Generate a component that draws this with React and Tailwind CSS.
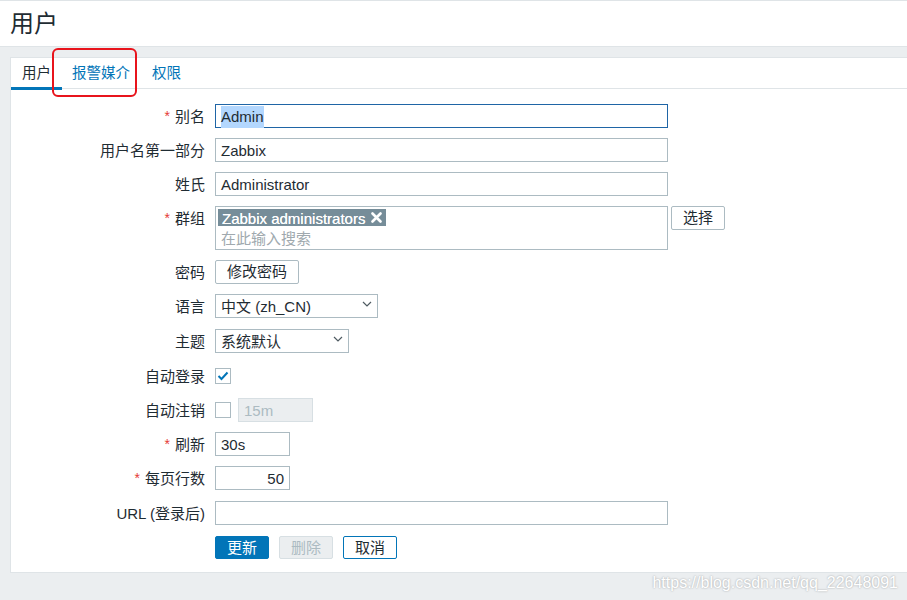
import React from "react";

const Req = () => <span className="text-[#e53935] mr-[5px] text-[14px] relative top-[-1px]">*</span>;

function Label({ children, req, h = "h-[24px]", top = false }) {
  return (
    <div className={`${h} flex items-center justify-end pt-[2px] text-[15px] text-[#1f2c33] whitespace-nowrap ${top ? "self-start" : ""}`}>
      {req && <Req />}
      {children}
    </div>
  );
}

function Input({ w, value, right = false, focus = false, disabled = false, selected = false }) {
  return (
    <div
      className={`${w} h-[24px] border flex items-center pt-[2px] text-[15px] ${
        focus ? "border-[#1f65a6]" : disabled ? "border-[#d7dfe3] bg-[#ebeef0]" : "border-[#acbbc2] bg-white"
      } ${right ? "justify-end pr-[5px]" : "pl-[5px]"} ${disabled ? "text-[#acbbc2]" : "text-[#1f2c33]"}`}
    >
      {selected ? <span className="bg-[#b3d7fe]">{value}</span> : value}
    </div>
  );
}

function Btn({ w, children }) {
  return (
    <div className={`${w} h-[24px] border border-[#acbbc2] rounded-[2px] bg-white flex items-center justify-center pt-[1px] text-[15px] text-[#1f2c33]`}>
      {children}
    </div>
  );
}

function Select({ w, value }) {
  return (
    <div className={`${w} h-[24px] border border-[#acbbc2] bg-white flex items-center justify-between pl-[5px] pr-[5px] text-[15px] text-[#1f2c33]`}>
      <span className="pt-[2px]">{value}</span>
      <svg width="10" height="6" viewBox="0 0 10 6" className="mb-[4px]">
        <path d="M1 1 L5 5 L9 1" fill="none" stroke="#4f5b62" strokeWidth="1.2" />
      </svg>
    </div>
  );
}

function Checkbox({ checked }) {
  return (
    <div className="w-[16px] h-[16px] border border-[#acbbc2] bg-white flex items-center justify-center">
      {checked && (
        <svg width="12" height="10" viewBox="0 0 12 10">
          <path d="M1.5 5 L4.5 8 L10.5 1.5" fill="none" stroke="#0275b8" strokeWidth="2" />
        </svg>
      )}
    </div>
  );
}

export default function App() {
  return (
    <div className="relative w-full min-h-[600px] bg-[#ebeef0] [font-family:'Liberation_Sans','Noto_Sans_CJK_SC',sans-serif] overflow-hidden">
      <div className="h-[47px] bg-white border-t border-b border-[#dfe4e7] flex items-center pl-[10px]">
        <h1 className="text-[24px] leading-none text-[#1f2c33] mt-[1px]">用户</h1>
      </div>

      <div className="pl-[10px] pt-[10px]">
        <div className="bg-white border border-r-0 border-[#dfe4e7] h-[516px]">
          <div className="h-[31px] border-b border-[#dfe4e7] flex text-[14.5px]">
            <div className="relative px-[11px] flex items-center pt-[1px] text-[#1f2c33]">
              用户
              <span className="absolute left-0 right-0 bottom-[-2px] h-[3px] bg-[#0275b8]" />
            </div>
            <div className="pl-[10px] pr-[11px] flex items-center pt-[1px] text-[#0275b8]">报警媒介</div>
            <div className="px-[11px] flex items-center pt-[1px] text-[#0275b8]">权限</div>
          </div>

          <div className="grid grid-cols-[194px_1fr] gap-x-[10px] gap-y-[10px] pt-[15px]">
            <Label req>别名</Label>
            <Input w="w-[453px]" value="Admin" focus selected />

            <Label>用户名第一部分</Label>
            <Input w="w-[453px]" value="Zabbix" />

            <Label>姓氏</Label>
            <Input w="w-[453px]" value="Administrator" />

            <Label req top>群组</Label>
            <div className="flex items-start gap-[3px]">
              <div className="w-[453px] h-[44px] border border-[#acbbc2] bg-white pl-[2px] pt-[2px] flex flex-col items-start">
                <div className="h-[17px] bg-[#768d99] text-white text-[15px] leading-[17px] pl-[4px] pr-[4px] flex items-center gap-[6px]">
                  <span className="pt-[1px] [text-shadow:0_0_0.4px_white]">Zabbix administrators</span>
                  <svg width="11" height="11" viewBox="0 0 11 11">
                    <path d="M1.5 1.5 L9.5 9.5 M9.5 1.5 L1.5 9.5" stroke="white" strokeWidth="2.6" strokeLinecap="round" />
                  </svg>
                </div>
                <div className="pl-[3px] pt-[2px] text-[15px] leading-[22px] text-[#a0a9ae]">在此输入搜索</div>
              </div>
              <Btn w="w-[54px]">选择</Btn>
            </div>

            <Label>密码</Label>
            <div><Btn w="w-[84px]">修改密码</Btn></div>

            <Label h="h-[25px]">语言</Label>
            <div><Select w="w-[163px]" value="中文 (zh_CN)" /></div>

            <Label h="h-[25px]">主题</Label>
            <div><Select w="w-[134px]" value="系统默认" /></div>

            <Label>自动登录</Label>
            <div className="flex items-center"><Checkbox checked /></div>

            <Label>自动注销</Label>
            <div className="flex items-center gap-[7px]">
              <Checkbox />
              <Input w="w-[75px]" value="15m" disabled />
            </div>

            <Label req>刷新</Label>
            <Input w="w-[75px]" value="30s" />

            <Label req h="h-[25px]">每页行数</Label>
            <div><Input w="w-[75px]" value="50" right /></div>

            <Label h="h-[25px]">URL (登录后)</Label>
            <div><Input w="w-[453px]" value="" /></div>

            <div />
            <div className="flex gap-[10px]">
              <div className="w-[54px] h-[23px] rounded-[2px] bg-[#0275b8] border border-[#0275b8] flex items-center justify-center pt-[1px] text-[15px] text-white">更新</div>
              <div className="w-[54px] h-[23px] rounded-[2px] bg-[#ebeef0] border border-[#d7dfe3] flex items-center justify-center pt-[1px] text-[15px] text-[#acbbc2]">删除</div>
              <div className="w-[54px] h-[23px] rounded-[2px] bg-white border border-[#0275b8] flex items-center justify-center pt-[1px] text-[15px] text-[#1f2c33]">取消</div>
            </div>
          </div>
        </div>
      </div>

      <div className="absolute left-[52px] top-[48px] w-[85px] h-[49px] border-2 border-[#e8141c] rounded-[6px]" />

      <div className="absolute right-[9px] top-[571px] text-[16px] text-white [text-shadow:0_0_2px_rgba(0,0,0,0.35)] [font-family:'Liberation_Sans',sans-serif]">
        https://blog.csdn.net/qq_22648091
      </div>
    </div>
  );
}
